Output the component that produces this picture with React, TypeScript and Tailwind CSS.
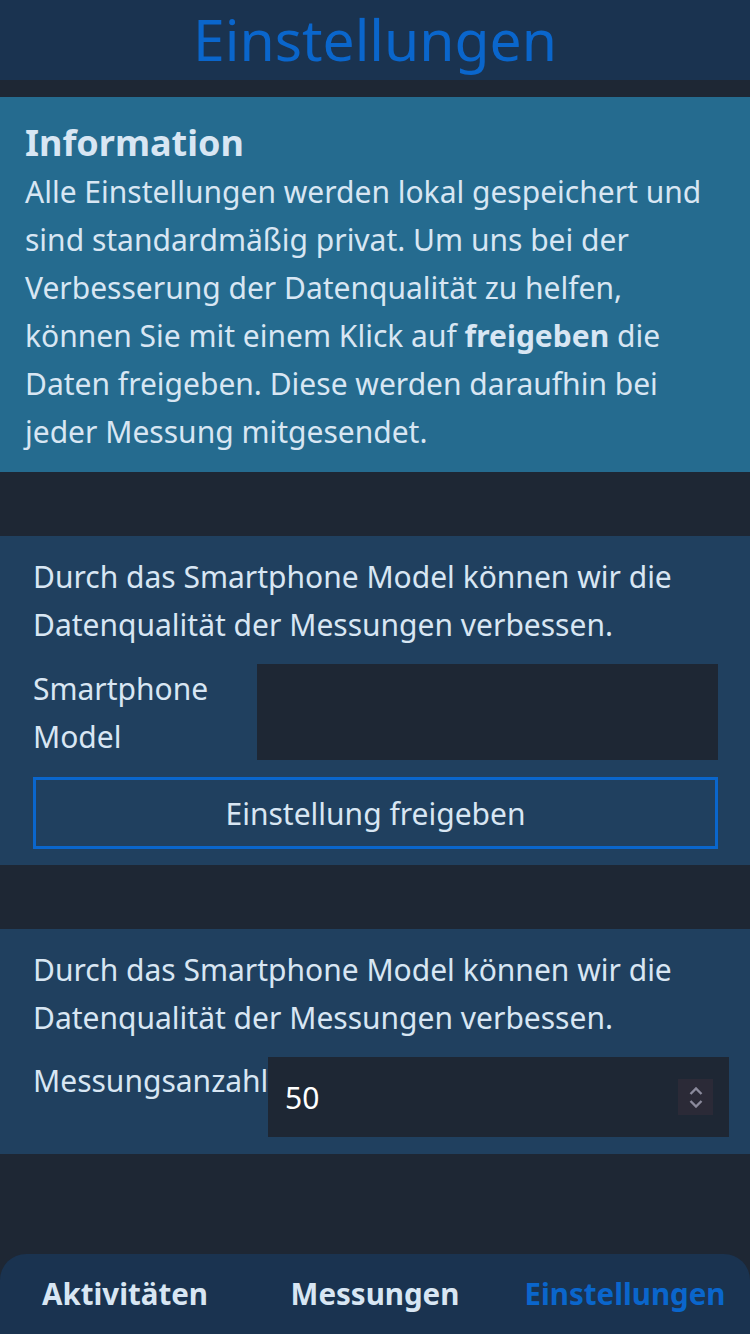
import React from "react";

const sans = "font-['Noto_Sans','Liberation_Sans',sans-serif]";

function Spinner() {
  return (
    <div className="w-[35px] h-[36px] bg-[#2b2a37] flex flex-col items-center justify-center gap-[5px]">
      <svg viewBox="0 0 14 8" className="w-[14px] h-[8px]" fill="none" stroke="#8b8a9c" strokeWidth="2.4">
        <path d="M1.5 7 7 1.5 12.5 7" />
      </svg>
      <svg viewBox="0 0 14 8" className="w-[14px] h-[8px]" fill="none" stroke="#8b8a9c" strokeWidth="2.4">
        <path d="M1.5 1 7 6.5 12.5 1" />
      </svg>
    </div>
  );
}

export default function App() {
  return (
    <div className={`${sans} min-h-[1334px] bg-[#1e2734] flex flex-col text-[#d8e6f3]`}>
      <header className="h-[80px] bg-[#1a3350] flex items-center justify-center">
        <h1 className="text-[57px] leading-none text-[#0a66cc] -mt-[2px]">Einstellungen</h1>
      </header>

      <section className="mt-[17px] bg-[#256b8f] pl-[25px] pr-[10px] pt-[21px] pb-[16px]">
        <h2 className="text-[36px] font-bold leading-[50px]">Information</h2>
        <p className="text-[30px] leading-[48px] whitespace-nowrap">
          Alle Einstellungen werden lokal gespeichert und
          <br />
          sind standardmäßig privat. Um uns bei der
          <br />
          Verbesserung der Datenqualität zu helfen,
          <br />
          können Sie mit einem Klick auf <b>freigeben</b> die
          <br />
          Daten freigeben. Diese werden daraufhin bei
          <br />
          jeder Messung mitgesendet.
        </p>
      </section>

      <section className="mt-[64px] bg-[#20405f] pl-[33px] pr-[32px] pt-[17px] pb-[16px]">
        <p className="text-[30px] leading-[48px]">
          Durch das Smartphone Model können wir die Datenqualität der Messungen verbessen.
        </p>
        <div className="mt-[15px] flex">
          <label className="w-[224px] text-[30px] leading-[48px] pt-[1px]">Smartphone Model</label>
          <div className="w-[461px] h-[96px] bg-[#1e2734]" />
        </div>
        <button className="mt-[16px] w-full h-[72px] border-[3px] border-[#0a66cc] text-[30px] text-[#d8e6f3] flex items-center justify-center">
          Einstellung freigeben
        </button>
      </section>

      <section className="mt-[64px] bg-[#20405f] pl-[33px] pr-[32px] pt-[17px] pb-[17px]">
        <p className="text-[30px] leading-[48px]">
          Durch das Smartphone Model können wir die Datenqualität der Messungen verbessen.
        </p>
        <div className="mt-[15px] flex">
          <label className="w-[235px] shrink-0 text-[30px] leading-[48px] whitespace-nowrap">Messungsanzahl</label>
          <div className="w-[461px] h-[80px] shrink-0 bg-[#1e2734] flex items-center pl-[17px] pr-[16px]">
            <span className="flex-1 text-[30px] text-white">50</span>
            <Spinner />
          </div>
        </div>
      </section>

      <nav className="mt-auto h-[80px] bg-[#1a3350] rounded-t-[26px] grid grid-cols-3 items-center text-[29.5px] font-bold">
        <span className="text-center text-[#d8e6f3]">Aktivitäten</span>
        <span className="text-center text-[#d8e6f3]">Messungen</span>
        <span className="text-center text-[#0a66cc]">Einstellungen</span>
      </nav>
    </div>
  );
}
